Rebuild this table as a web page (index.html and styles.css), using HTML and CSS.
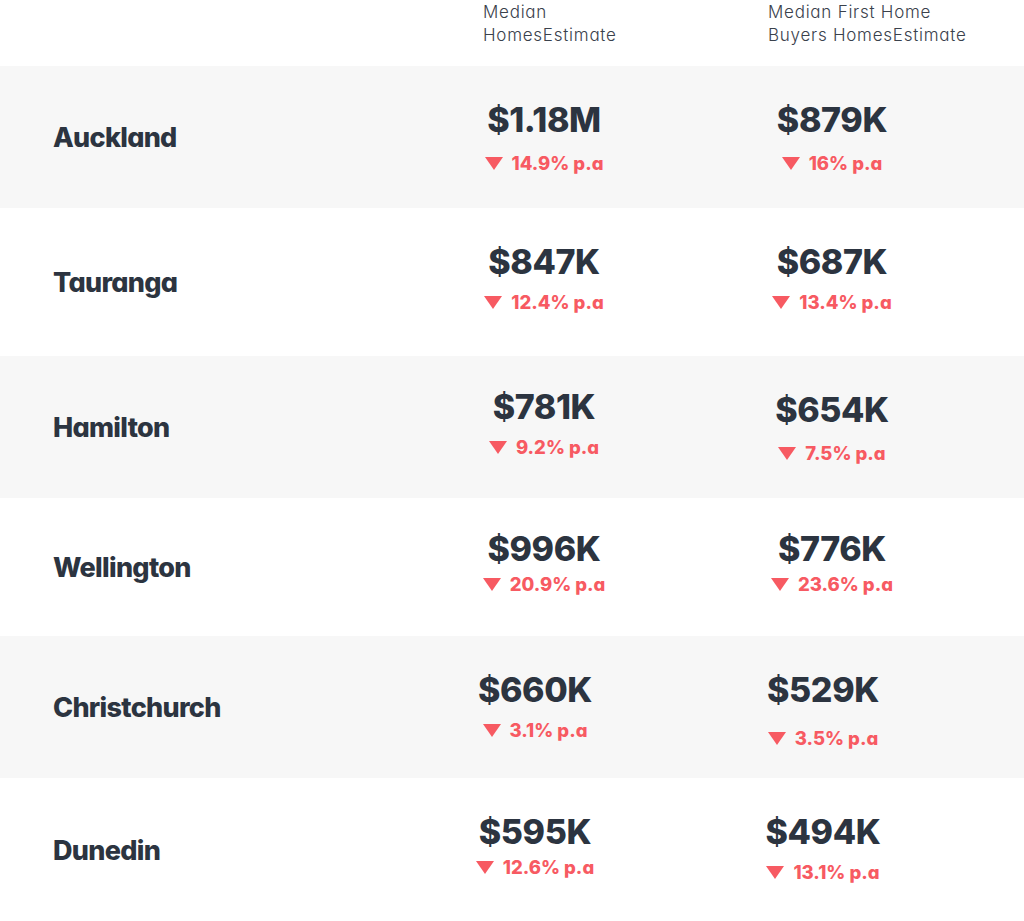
FILE: index.html
```html
<!DOCTYPE html>
<html lang="en">
<head>
<meta charset="utf-8">
<title>Median Home Estimates</title>
<link rel="stylesheet" href="styles.css">
</head>
<body>
<div class="table">
  <div class="head">
    <div></div>
    <div class="head__cell">Median<br>HomesEstimate</div>
    <div class="head__cell">Median First Home<br>Buyers HomesEstimate</div>
  </div>

  <div class="row row--shade">
    <div class="city">Auckland</div>
    <div class="cell"><div class="price">$1.18M</div><div class="change change--far"><span class="tri"></span>14.9% p.a</div></div>
    <div class="cell"><div class="price">$879K</div><div class="change change--far"><span class="tri"></span>16% p.a</div></div>
  </div>

  <div class="row row--tall">
    <div class="city">Tauranga</div>
    <div class="cell"><div class="price">$847K</div><div class="change"><span class="tri"></span>12.4% p.a</div></div>
    <div class="cell"><div class="price">$687K</div><div class="change"><span class="tri"></span>13.4% p.a</div></div>
  </div>

  <div class="row row--shade">
    <div class="city">Hamilton</div>
    <div class="cell cell--up"><div class="price">$781K</div><div class="change"><span class="tri"></span>9.2% p.a</div></div>
    <div class="cell"><div class="price">$654K</div><div class="change change--far"><span class="tri"></span>7.5% p.a</div></div>
  </div>

  <div class="row row--short">
    <div class="city">Wellington</div>
    <div class="cell cell--up"><div class="price">$996K</div><div class="change change--near"><span class="tri"></span>20.9% p.a</div></div>
    <div class="cell cell--up"><div class="price">$776K</div><div class="change change--near"><span class="tri"></span>23.6% p.a</div></div>
  </div>

  <div class="row row--shade row--shifted">
    <div class="city">Christchurch</div>
    <div class="cell"><div class="price">$660K</div><div class="change"><span class="tri"></span>3.1% p.a</div></div>
    <div class="cell"><div class="price">$529K</div><div class="change change--farther"><span class="tri"></span>3.5% p.a</div></div>
  </div>

  <div class="row row--shifted">
    <div class="city">Dunedin</div>
    <div class="cell"><div class="price">$595K</div><div class="change change--near"><span class="tri"></span>12.6% p.a</div></div>
    <div class="cell"><div class="price">$494K</div><div class="change"><span class="tri"></span>13.1% p.a</div></div>
  </div>
</div>
</body>
</html>
```

FILE: styles.css
```css
html, body {
  margin: 0;
  padding: 0;
  background: #ffffff;
}

body {
  font-family: Inter, "Noto Sans", sans-serif;
  font-feature-settings: "cv11" 1;
  color: #2c3440;
}

.table {
  width: 1024px;
}

.head {
  display: grid;
  grid-template-columns: 483px 285px 1fr;
  height: 66px;
  padding-top: 1px;
  box-sizing: border-box;
}

.head__cell {
  font-size: 17px;
  font-weight: 300;
  line-height: 23px;
  letter-spacing: 0.75px;
  color: #3a414c;
}

.row {
  display: grid;
  grid-template-columns: 448px 192px 1fr;
  height: 142px;
  background: #ffffff;
}

.row--shade {
  background: #f7f7f7;
}

.row--tall {
  height: 148px;
}

.row--short {
  height: 138px;
}

.row--shifted {
  grid-template-columns: 448px 174px 1fr;
  height: 142px;
}

.row--shifted:last-child {
  height: 145px;
}

.city {
  align-self: center;
  padding-left: 53px;
  font-size: 27px;
  font-weight: 800;
  line-height: 1;
  letter-spacing: -0.7px;
}

.cell {
  display: flex;
  flex-direction: column;
  align-items: center;
  padding-top: 37px;
}

.cell--up {
  padding-top: 34px;
}

.price {
  font-size: 34px;
  font-weight: 800;
  line-height: 1;
  letter-spacing: -0.4px;
  white-space: nowrap;
}

.change {
  display: flex;
  align-items: center;
  gap: 9px;
  margin-top: 14px;
  font-size: 18.5px;
  font-weight: 800;
  line-height: 1;
  color: #f75a62;
  white-space: nowrap;
}

.change--near {
  margin-top: 9px;
}

.change--far {
  margin-top: 17px;
}

.change--farther {
  margin-top: 22px;
}

.tri {
  width: 0;
  height: 0;
  border-left: 9.5px solid transparent;
  border-right: 9.5px solid transparent;
  border-top: 13px solid #f75a62;
  margin-top: 1px;
}
```
